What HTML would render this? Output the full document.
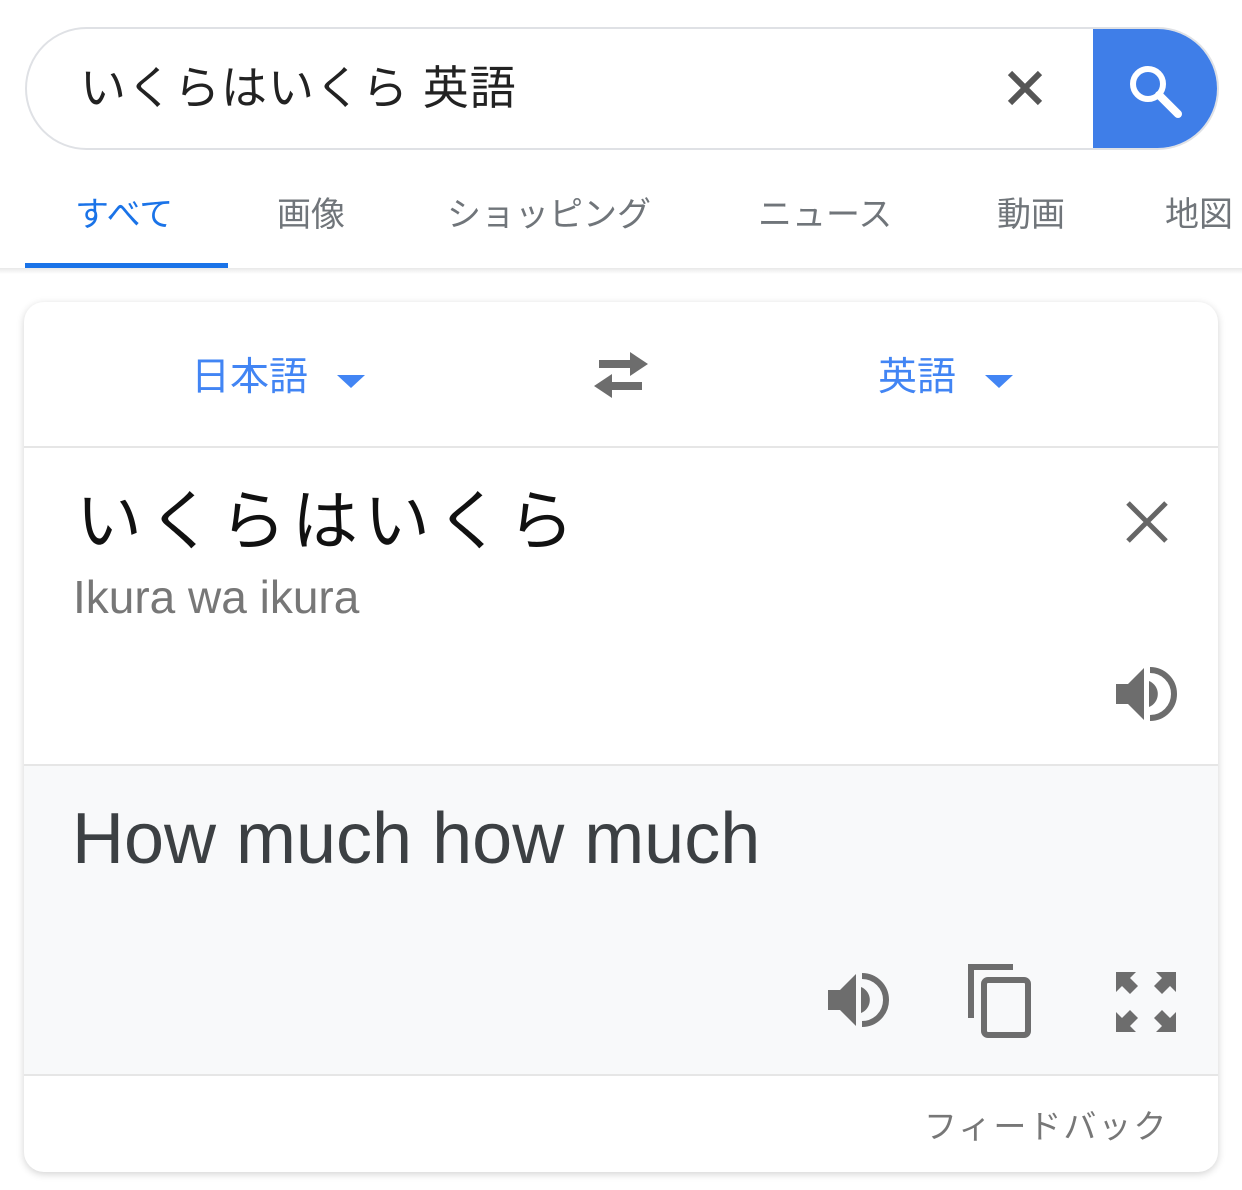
<html><head><style>
body{margin:0;width:1242px;height:1190px;background:#fff;font-family:"Liberation Sans","Noto Sans CJK JP",sans-serif;position:relative;overflow:hidden}
.a{position:absolute}
</style></head><body>
<div class="a" style="left:25px;top:27px;width:1190px;height:119px;border:2px solid #dfe1e5;border-radius:62px;overflow:hidden">
 <div class="a" style="left:1066px;top:-2px;width:130px;height:125px;background:#3f7ee8"></div>
</div>
<div class="a" style="left:80px;top:52px;font-size:46px;color:#222;white-space:nowrap;letter-spacing:1px">いくらはいくら 英語</div>
<svg class="a" style="left:1005px;top:68px" width="40" height="40" viewBox="0 0 40 40"><path d="M5 5L35 35M35 5L5 35" stroke="#555" stroke-width="6"/></svg>
<svg class="a" style="left:1124px;top:60px" width="60" height="60" viewBox="0 0 60 60"><circle cx="24" cy="24" r="15" stroke="#fff" stroke-width="6" fill="none"/><path d="M35 35L54 54" stroke="#fff" stroke-width="8" stroke-linecap="round"/></svg>
<div class="a" style="top:187px;left:0;width:1242px;font-size:34px;color:#70757a;white-space:nowrap">
 <span class="a" style="left:75px;color:#1a73e8">すべて</span>
 <span class="a" style="left:277px">画像</span>
 <span class="a" style="left:447px">ショッピング</span>
 <span class="a" style="left:758px">ニュース</span>
 <span class="a" style="left:997px">動画</span>
 <span class="a" style="left:1165px">地図</span>
</div>
<div class="a" style="left:25px;top:263px;width:203px;height:5px;background:#1a73e8"></div>
<div class="a" style="left:0;top:268px;width:1242px;height:6px;background:linear-gradient(#e8e8e8,#fff)"></div>
<div class="a" style="left:24px;top:302px;width:1194px;height:870px;border-radius:20px;box-shadow:0 2px 8px rgba(0,0,0,.18);overflow:hidden;background:#fff">
 <div class="a" style="left:167px;top:44px;font-size:39px;color:#4285f4">日本語</div>
 <div class="a" style="left:313px;top:73px;width:0;height:0;border-left:14px solid transparent;border-right:14px solid transparent;border-top:13px solid #4285f4"></div>
 <div class="a" style="left:854px;top:44px;font-size:39px;color:#4285f4">英語</div>
 <div class="a" style="left:961px;top:73px;width:0;height:0;border-left:14px solid transparent;border-right:14px solid transparent;border-top:13px solid #4285f4"></div>
 <svg class="a" style="left:566px;top:50px" width="62" height="46" viewBox="0 0 62 46"><path d="M9 8H40V0L58 12L40 24V16H9Z" fill="#6d6d6d"/><path d="M52 30H22V22L4 34L22 46V38H52Z" fill="#6d6d6d"/></svg>
 <div class="a" style="left:0;top:144px;width:1194px;height:2px;background:#e6e6e6"></div>
 <div class="a" style="left:52px;top:166px;font-size:66px;color:#111;letter-spacing:6px;white-space:nowrap">いくらはいくら</div>
 <div class="a" style="left:49px;top:268px;font-size:46px;color:#777">Ikura wa ikura</div>
 <svg class="a" style="left:1101px;top:198px" width="44" height="44" viewBox="0 0 44 44"><path d="M3 3L41 41M41 3L3 41" stroke="#666" stroke-width="5"/></svg>
 <svg class="a" style="left:1090px;top:362px" width="64" height="60" viewBox="0 0 64 60"><path d="M2 20H14L30 4V56L14 40H2Z" fill="#6d6d6d"/><path d="M35 17A14 14 0 0 1 35 43Z" fill="#6d6d6d"/><path d="M36 6A24 24 0 0 1 36 54" stroke="#6d6d6d" stroke-width="6" fill="none"/></svg>
 <div class="a" style="left:0;top:462px;width:1194px;height:2px;background:#e6e6e6"></div>
 <div class="a" style="left:0;top:464px;width:1194px;height:308px;background:#f8f9fa"></div>
 <div class="a" style="left:48px;top:496px;font-size:72px;color:#3c4043;white-space:nowrap">How much how much</div>
 <svg class="a" style="left:802px;top:668px" width="64" height="60" viewBox="0 0 64 60"><path d="M2 20H14L30 4V56L14 40H2Z" fill="#6d6d6d"/><path d="M35 17A14 14 0 0 1 35 43Z" fill="#6d6d6d"/><path d="M36 6A24 24 0 0 1 36 54" stroke="#6d6d6d" stroke-width="6" fill="none"/></svg>
 <svg class="a" style="left:944px;top:662px" width="66" height="74" viewBox="0 0 66 74"><path d="M3 54V3H45" stroke="#6d6d6d" stroke-width="6" fill="none"/><rect x="16" y="16" width="44" height="55" rx="4" stroke="#6d6d6d" stroke-width="6" fill="none"/></svg>
 <svg class="a" style="left:1092px;top:670px" width="60" height="60" viewBox="0 0 60 60" fill="#6d6d6d"><path d="M0 0H20L14 6L22 14L14 22L6 14L0 20Z"/><path d="M60 0H40L46 6L38 14L46 22L54 14L60 20Z"/><path d="M0 60H20L14 54L22 46L14 38L6 46L0 40Z"/><path d="M60 60H40L46 54L38 46L46 38L54 46L60 40Z"/></svg>
 <div class="a" style="left:0;top:772px;width:1194px;height:2px;background:#e6e6e6"></div>
 <div class="a" style="left:900px;top:798px;font-size:33px;color:#777;letter-spacing:2px">フィードバック</div>
</div>
</body></html>
